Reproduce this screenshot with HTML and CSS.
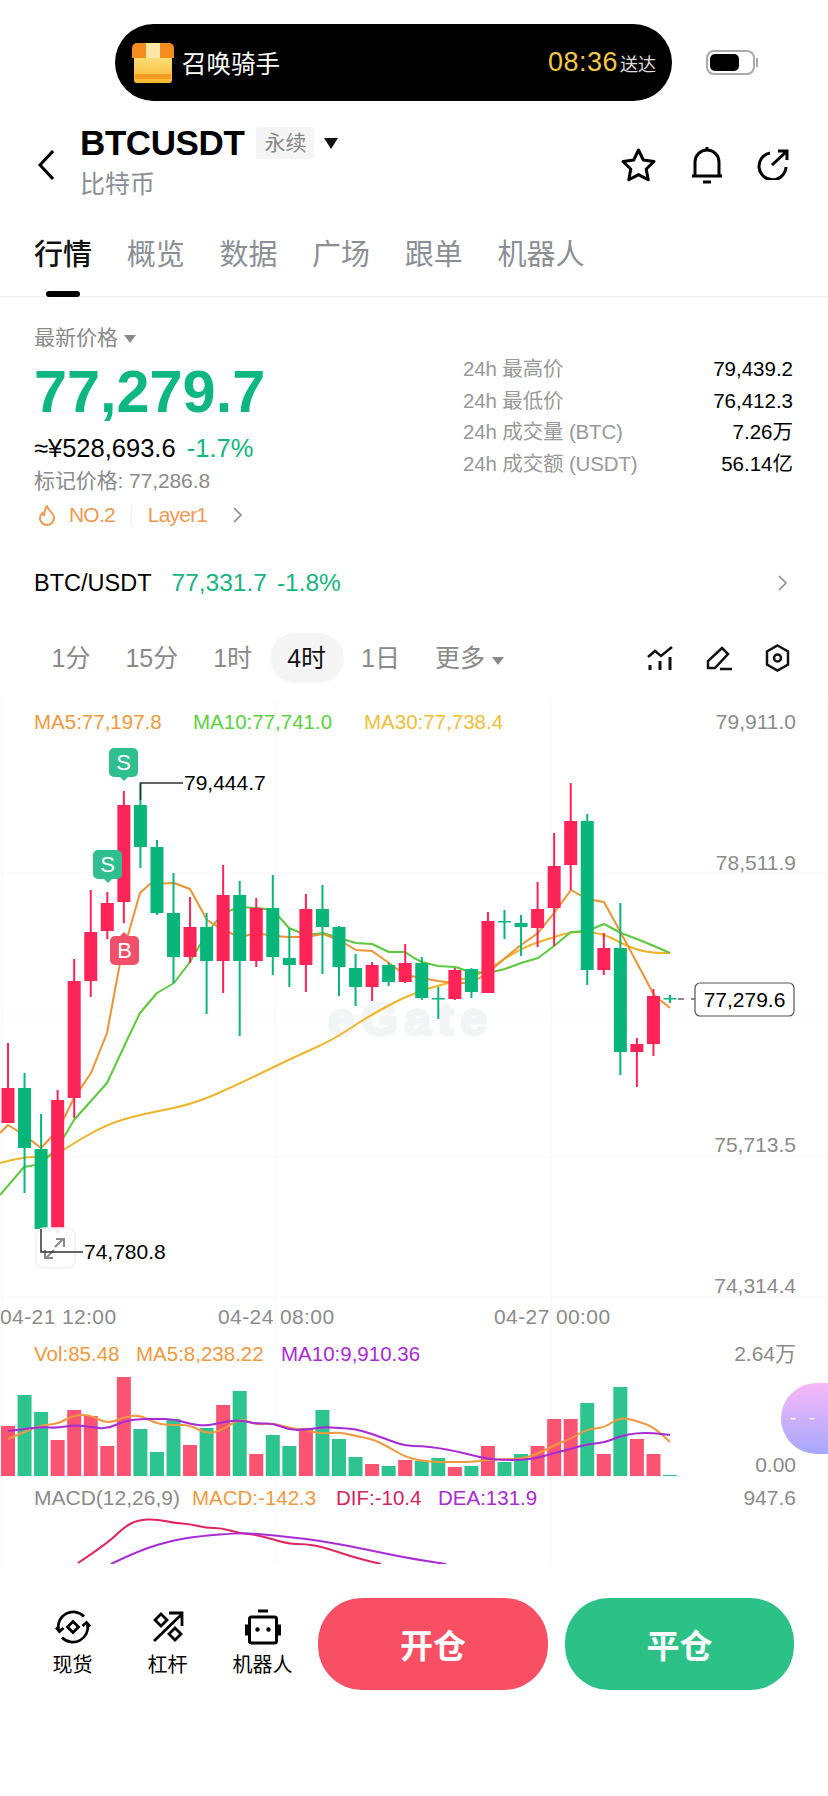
FILE: index.html
```html
<!DOCTYPE html>
<html lang="zh-CN">
<head>
  <meta charset="UTF-8" />
  <meta name="viewport" content="width=device-width, initial-scale=1.0"/>
  <title>BTCUSDT 永续</title>
  <link rel="stylesheet" href="styles.css">
</head>
<body>
  <!-- Barra superior con la isla de pedido -->
  <div class="status">
    <div class="island">
      <svg class="box-icon" width="42" height="40" viewBox="0 0 42 40">
        <defs>
          <linearGradient id="boxFill" x1="0" y1="0" x2="0" y2="1">
            <stop offset="0" stop-color="#ffe58a"/>
            <stop offset="1" stop-color="#f8b82e"/>
          </linearGradient>
        </defs>
        <rect x="2" y="8" width="38" height="32" rx="3" fill="url(#boxFill)"/>
        <path d="M5 0h32a5 5 0 0 1 5 5v10H0V5a5 5 0 0 1 5-5z" fill="#f58d1e"/>
        <rect x="14" y="0" width="14" height="15" fill="#ffe7a8"/>
        <rect x="3" y="31" width="36" height="5" fill="#f59a23"/>
      </svg>
      <span class="island-title">召唤骑手</span>
      <span class="island-time">08:36</span>
      <span class="island-note">送达</span>
    </div>
    <div class="battery"><span class="battery-level"></span></div>
  </div>

  <header class="header">
    <svg class="back" width="16" height="30" viewBox="0 0 16 30">
      <path d="M15 1L2 15l13 14" fill="none" stroke="#000" stroke-width="3"/>
    </svg>
    <div class="title-block">
      <div class="title-row">
        <h1 class="symbol">BTCUSDT</h1>
        <span class="tag">永续</span>
        <span class="tri tri-black"></span>
      </div>
      <div class="coin-name">比特币</div>
    </div>
    <div class="header-icons">
      <svg width="37" height="36" viewBox="0 0 37 36">
        <path d="M18.500 3l4.800 10 10.700 1.500-7.800 7.500 2 10.800-9.700-5.200-9.700 5.200 2-10.800L3 14.500 13.700 13z" fill="none" stroke="#000" stroke-width="3" stroke-linejoin="round"/>
      </svg>
      <svg width="32" height="37" viewBox="0 0 32 37">
        <path d="M4 28V15a12 12 0 0 1 24 0v13M1 29h30M16 0v4M12 35h8" fill="none" stroke="#000" stroke-width="3"/>
      </svg>
      <svg width="32" height="33" viewBox="0 0 32 33">
        <path d="M13 6A13.500 13.500 0 1 0 29 20M15 18L29 5M21 4h9v9" fill="none" stroke="#000" stroke-width="3"/>
      </svg>
    </div>
  </header>

  <nav class="tabs">
    <a class="tab active">行情</a>
    <a class="tab">概览</a>
    <a class="tab">数据</a>
    <a class="tab">广场</a>
    <a class="tab">跟单</a>
    <a class="tab">机器人</a>
  </nav>

  <section class="summary">
    <div class="price-col">
      <div class="price-label">最新价格 <span class="tri tri-gray"></span></div>
      <div class="price">77,279.7</div>
      <div class="price-sub">≈¥528,693.6 <span class="up">-1.7%</span></div>
      <div class="mark">标记价格: 77,286.8</div>
      <div class="rank">
        <svg width="18" height="21" viewBox="0 0 18 21">
          <path d="M9 1c.5 4 7 6.500 7 12a7 7 0 0 1-14 0c0-2.500 1.200-3.800 2.500-5 .3 1.300.8 2 1.500 2.300C6.200 7 7 4 9 1z" fill="none" stroke="#f2984f" stroke-width="2" stroke-linejoin="round"/>
        </svg>
        <span class="rank-no">NO.2</span>
        <span class="rank-line"></span>
        <span>Layer1</span>
        <svg class="rank-arrow" width="10" height="16" viewBox="0 0 10 16">
          <path d="M1 1l7 7-7 7" fill="none" stroke="#888" stroke-width="1.500"/>
        </svg>
      </div>
    </div>
    <div class="stats">
      <div class="stat"><span>24h 最高价</span><b>79,439.2</b></div>
      <div class="stat"><span>24h 最低价</span><b>76,412.3</b></div>
      <div class="stat"><span>24h 成交量 (BTC)</span><b>7.26万</b></div>
      <div class="stat"><span>24h 成交额 (USDT)</span><b>56.14亿</b></div>
    </div>
  </section>

  <div class="pair">
    <span class="pair-name">BTC/USDT</span>
    <span class="pair-price">77,331.7</span>
    <span class="pair-price">-1.8%</span>
    <svg class="pair-arrow" width="10" height="16" viewBox="0 0 10 16">
      <path d="M1 1l7 7-7 7" fill="none" stroke="#888" stroke-width="1.500"/>
    </svg>
  </div>

  <div class="periods">
    <span class="period">1分</span>
    <span class="period">15分</span>
    <span class="period">1时</span>
    <span class="period active">4时</span>
    <span class="period">1日</span>
    <span class="period">更多 <span class="tri tri-gray"></span></span>
    <div class="tools">
      <svg width="26" height="24" viewBox="0 0 26 24">
        <path d="M1 11l7-6 6 5L25 1" fill="none" stroke="#111" stroke-width="2.500"/>
        <path d="M3 19v5M13 15v9M23 11v13" fill="none" stroke="#111" stroke-width="3"/>
      </svg>
      <svg width="26" height="25" viewBox="0 0 26 25">
        <path d="M16 2l6 6L9 22H2v-7zM14 23h12" fill="none" stroke="#111" stroke-width="2.500"/>
      </svg>
      <svg width="25" height="28" viewBox="0 0 25 28">
        <path d="M12.500 1.500l10.500 6v13l-10.500 6-10.500-6v-13z" fill="none" stroke="#111" stroke-width="2.500"/>
        <circle cx="12.500" cy="14" r="3.500" fill="none" stroke="#111" stroke-width="2.500"/>
      </svg>
    </div>
  </div>

  <div class="chart">
    <!-- viewBox en coordenadas de pagina: 683 es donde empieza el grafico -->
    <svg id="kline" width="828" height="881" viewBox="0 683 828 881">
      <g id="grid"></g>
      <text class="wm" x="328" y="1035">eGate</text>
      <g id="lines"></g>
      <g id="candles"></g>

      <text class="t ma5" x="34" y="729">MA5:77,197.8</text>
      <text class="t ma10" x="193" y="729">MA10:77,741.0</text>
      <text class="t ma30" x="364" y="729">MA30:77,738.4</text>
      <text class="t axis end" x="796" y="729">79,911.0</text>
      <text class="t axis end" x="796" y="870">78,511.9</text>
      <text class="t axis end" x="796" y="1152">75,713.5</text>
      <text class="t axis end" x="796" y="1293">74,314.4</text>
      <text class="t axis date" x="0" y="1324">04-21 12:00</text>
      <text class="t axis date" x="218" y="1324">04-24 08:00</text>
      <text class="t axis date" x="494" y="1324">04-27 00:00</text>

      <path class="sig-s" d="M114 748h19a5 5 0 0 1 5 5v19a5 5 0 0 1-5 5h-5l-4 4-4-4h-6a5 5 0 0 1-5-5v-19a5 5 0 0 1 5-5z"/>
      <text class="sig-t" x="123.500" y="770">S</text>
      <path class="sig-s" d="M98 850h19a5 5 0 0 1 5 5v19a5 5 0 0 1-5 5h-5l-4 4-4-4h-6a5 5 0 0 1-5-5v-19a5 5 0 0 1 5-5z"/>
      <text class="sig-t" x="107.500" y="872">S</text>
      <path class="sig-b" d="M115 936h5l4-4 4 4h6a5 5 0 0 1 5 5v19a5 5 0 0 1-5 5h-19a5 5 0 0 1-5-5v-19a5 5 0 0 1 5-5z"/>
      <text class="sig-t" x="124.500" y="958">B</text>

      <path class="lead" d="M140.500 800V783H183"/>
      <text class="t high" x="184" y="790">79,444.7</text>

      <rect class="expand" x="36" y="1228" width="39" height="40" rx="8"/>
      <path class="expand-arrow" d="M55 1247l8-8M56 1239h8v8M54 1250l-8 8M45 1250v8h8"/>
      <path class="lead" d="M41 1229V1252H83"/>
      <text class="t high" x="84" y="1259">74,780.8</text>

      <path class="price-dash" d="M678 999H695"/>
      <rect class="price-box" x="695" y="983" width="99" height="33" rx="5"/>
      <text class="t high mid" x="744.500" y="1007">77,279.6</text>

      <text class="t vol-c" x="34" y="1361">Vol:85.48</text>
      <text class="t vol-c" x="136" y="1361">MA5:8,238.22</text>
      <text class="t purple" x="281" y="1361">MA10:9,910.36</text>
      <text class="t axis end" x="796" y="1361">2.64万</text>
      <text class="t axis end" x="796" y="1472">0.00</text>

      <text class="t axis" x="34" y="1505">MACD(12,26,9)</text>
      <text class="t vol-c" x="192" y="1505">MACD:-142.3</text>
      <text class="t pink" x="336" y="1505">DIF:-10.4</text>
      <text class="t purple" x="438" y="1505">DEA:131.9</text>
      <text class="t axis end" x="796" y="1505">947.6</text>
    </svg>
    <div class="float-btn">- -</div>
  </div>

  <footer class="actions">
    <a class="action">
      <svg width="36" height="36" viewBox="0 0 36 36">
        <path d="M3.500 21A15 15 0 0 1 29 7.500M32.500 15A15 15 0 0 1 7 28.500" fill="none" stroke="#000" stroke-width="2.800"/>
        <path d="M1 18.500l3.500 4 4-3.500M35 17.500l-3.500-4-4 3.500" fill="none" stroke="#000" stroke-width="2.800"/>
        <path d="M18 12.500l5.500 5.500-5.500 5.500-5.500-5.500z" fill="none" stroke="#000" stroke-width="2.800"/>
      </svg>
      <span>现货</span>
    </a>
    <a class="action">
      <svg width="32" height="32" viewBox="0 0 32 32">
        <path d="M2 30L30 3M17 2h13v13" fill="none" stroke="#000" stroke-width="2.800"/>
        <path d="M9 3l6 6-6 6-6-6zM23 17l6 6-6 6-6-6z" fill="none" stroke="#000" stroke-width="2.800"/>
      </svg>
      <span>杠杆</span>
    </a>
    <a class="action">
      <svg width="36" height="35" viewBox="0 0 36 35">
        <path d="M13 1.500h10" stroke="#000" stroke-width="3"/>
        <rect x="4.500" y="7.500" width="27" height="26" rx="2" fill="none" stroke="#000" stroke-width="3"/>
        <path d="M1.500 15v11M34.500 15v11" stroke="#000" stroke-width="3"/>
        <circle cx="12.500" cy="20" r="2.200"/>
        <circle cx="23.500" cy="20" r="2.200"/>
      </svg>
      <span>机器人</span>
    </a>
    <button class="trade open">开仓</button>
    <button class="trade close">平仓</button>
  </footer>

  <script src="chart.js"></script>
</body>
</html>
```

FILE: styles.css
```css
* {
  box-sizing: border-box;
}

body {
  margin: 0;
  width: 828px;
  height: 1796px;
  overflow: hidden;
  background: white;
  color: #000;
  font-family: 'Liberation Sans', 'Noto Sans CJK SC', sans-serif;
}

/* Triangulos de los desplegables */
.tri {
  display: inline-block;
  width: 0;
  height: 0;
  border-left: 6px solid transparent;
  border-right: 6px solid transparent;
  border-top: 9px solid #888;
}

.tri-black {
  border-left-width: 7px;
  border-right-width: 7px;
  border-top: 11px solid #111;
}

.tri-gray {
  vertical-align: 2px;
  border-left-width: 6px;
  border-right-width: 6px;
  border-top: 8px solid #8a8a8a;
}

/* Barra superior */
.status {
  display: flex;
  align-items: center;
  gap: 34px;
  padding: 24px 0 0 115px;
}

.island {
  display: flex;
  align-items: center;
  width: 557px;
  height: 77px;
  padding: 0 16px 0 17px;
  border-radius: 39px;
  background: #000;
  color: white;
}

.box-icon {
  margin-right: 8px;
}

.island-title {
  font-size: 24.5px;
}

.island-time {
  margin-left: auto;
  margin-right: 2px;
  color: #f5c842;
  font-size: 27px;
  letter-spacing: 0.5px;
}

.island-note {
  color: #ddd;
  font-size: 18px;
}

.battery {
  position: relative;
  width: 49px;
  height: 25px;
  padding: 2px;
  border: 2px solid #aaa;
  border-radius: 8px;
}

.battery::after {
  content: "";
  position: absolute;
  top: 6px;
  right: -5px;
  width: 2px;
  height: 9px;
  background: #aaa;
}

.battery-level {
  display: block;
  width: 29px;
  height: 17px;
  border-radius: 5px;
  background: #000;
}

/* Cabecera */
.header {
  display: flex;
  align-items: flex-start;
  height: 73px;
  margin-top: 26px;
  padding-left: 38px;
}

.back {
  margin-top: 23px;
  margin-right: 26px;
}

.title-row {
  display: flex;
  align-items: center;
  height: 32px;
}

.symbol {
  margin: 0 12px 0 0;
  font-size: 35px;
  line-height: 32px;
  letter-spacing: -0.4px;
}

.tag {
  width: 58px;
  height: 32px;
  margin-right: 10px;
  border-radius: 3px;
  background: #f5f5f5;
  color: #888;
  font-size: 21px;
  line-height: 32px;
  text-align: center;
}

.coin-name {
  margin-top: 12px;
  color: #8a8f96;
  font-size: 25px;
  line-height: 26px;
}

.header-icons {
  display: flex;
  align-items: flex-start;
  gap: 34px;
  margin-left: auto;
  margin-right: 39px;
  margin-top: 20px;
}

/* Pestanas */
.tabs {
  display: flex;
  gap: 34.7px;
  height: 57px;
  margin-top: 40px;
  padding-left: 34px;
  border-bottom: 1px solid #eee;
}

.tab {
  position: relative;
  color: #8a8f96;
  font-size: 29px;
  line-height: 30px;
}

.tab.active {
  color: #111;
  font-weight: 500;
}

.tab.active::after {
  content: "";
  position: absolute;
  left: 12px;
  bottom: -1px;
  width: 34px;
  height: 6px;
  border-radius: 3px;
  background: #000;
}

/* Precio y estadisticas */
.summary {
  display: flex;
  justify-content: space-between;
  padding: 0 35px 0 34px;
}

.price-col {
  padding-top: 28px;
}

.price-label {
  color: #8a8a8a;
  font-size: 21px;
  line-height: 26px;
}

.price {
  margin-top: 11px;
  color: #0db77f;
  font-size: 59.4px;
  font-weight: bold;
  line-height: 60px;
}

.price-sub {
  margin-top: 12px;
  font-size: 25.5px;
  line-height: 28px;
}

.up {
  margin-left: 4px;
  color: #0db77f;
}

.mark {
  margin-top: 6px;
  color: #8a8a8a;
  font-size: 21px;
  letter-spacing: -0.1px;
  line-height: 26px;
}

.rank {
  display: flex;
  align-items: center;
  height: 26px;
  margin-top: 8px;
  margin-left: 4px;
  color: #f2984f;
  font-size: 21px;
  letter-spacing: -0.8px;
}

.rank-no {
  margin-left: 13px;
}

.rank-line {
  width: 1px;
  height: 20px;
  margin: 0 16px;
  background: #f0ece8;
}

.rank-arrow {
  margin-left: 26px;
}

.stats {
  width: 330px;
  padding-top: 56px;
}

.stat {
  display: flex;
  justify-content: space-between;
  height: 31.6px;
  color: #999;
  font-size: 20.5px;
  letter-spacing: -0.15px;
  line-height: 31.6px;
}

.stat b {
  color: #000;
  font-size: 20.5px;
  font-weight: normal;
  letter-spacing: 0;
}

/* Par spot */
.pair {
  display: flex;
  align-items: center;
  height: 30px;
  margin-top: 40px;
  padding: 0 40px 0 34px;
  font-size: 24.5px;
}

.pair-name {
  margin-right: 20px;
  font-size: 23.5px;
}

.pair-price {
  margin-right: 10px;
  color: #16b57f;
}

.pair-arrow {
  margin-left: auto;
}

/* Temporalidades */
.periods {
  display: flex;
  align-items: center;
  height: 50px;
  margin-top: 35px;
  padding: 0 38px 0 34px;
}

.period {
  height: 50px;
  padding: 0 17.5px;
  border-radius: 25px;
  color: #8a8a8a;
  font-size: 25px;
  line-height: 51px;
}

.period.active {
  background: #f5f5f5;
  color: #111;
}

.tools {
  display: flex;
  align-items: center;
  gap: 33px;
  margin-left: auto;
}

/* Grafico */
.chart {
  position: relative;
  height: 881px;
}

#kline {
  display: block;
}

.grid-line {
  stroke: #f6f6f7;
  stroke-width: 1;
}

.wm {
  fill: #f3f4f6;
  stroke: #f3f4f6;
  stroke-width: 3;
  font-size: 47px;
  font-weight: bold;
  letter-spacing: 7px;
}

.ma-line {
  fill: none;
  stroke-width: 2;
  stroke-linejoin: round;
}

.c-up {
  fill: #ff2457;
}

.c-down {
  fill: #08b67a;
}

.v-up {
  fill: #fb5372;
}

.v-down {
  fill: #2ec48f;
}

.t {
  font-size: 20.5px;
}

.end {
  text-anchor: end;
}

.mid {
  text-anchor: middle;
}

.axis {
  fill: #8b8b8b;
  font-size: 21px;
}

.date {
  letter-spacing: 0.4px;
}

.ma5 {
  fill: #f0993f;
}

.ma10 {
  fill: #5bd13f;
}

.ma30 {
  fill: #f0be3a;
}

.vol-c {
  fill: #f0993f;
}

.purple {
  fill: #a92bd6;
}

.pink {
  fill: #d6225f;
}

.high {
  fill: #000;
  font-size: 21px;
}

.lead {
  fill: none;
  stroke: #333;
  stroke-width: 1.5;
}

.sig-s {
  fill: #2fbf8f;
}

.sig-b {
  fill: #f0506a;
}

.sig-t {
  fill: white;
  font-size: 22px;
  text-anchor: middle;
}

.expand {
  fill: rgba(255, 255, 255, 0.85);
  stroke: #f0f0f0;
  stroke-width: 1.5;
}

.expand-arrow {
  fill: none;
  stroke: #888;
  stroke-width: 2;
}

.price-dash {
  stroke: #666;
  stroke-width: 1.5;
  stroke-dasharray: 6 7;
}

.price-box {
  fill: white;
  stroke: #555;
  stroke-width: 1.2;
}

.float-btn {
  position: absolute;
  top: 700px;
  right: 0;
  width: 47px;
  height: 71px;
  border-radius: 36px 0 0 36px;
  background: linear-gradient(to bottom, #f8b8f8, #a5a8fb);
  color: white;
  font-size: 18px;
  letter-spacing: 4px;
  line-height: 71px;
  text-align: center;
}

/* Barra inferior */
.actions {
  display: flex;
  margin-top: 34px;
  padding-left: 25px;
}

.action {
  display: flex;
  flex-direction: column;
  align-items: center;
  width: 95px;
  height: 92px;
  padding-top: 11px;
  font-size: 20px;
  line-height: 22px;
}

.action svg {
  height: 36px;
  margin-bottom: 9px;
}

.trade {
  width: 229px;
  height: 92px;
  margin-left: 17px;
  border: none;
  border-radius: 44px;
  color: white;
  font-family: inherit;
  font-size: 33px;
  font-weight: 700;
}

.trade.open {
  width: 230px;
  margin-left: 8px;
  background: #f94f64;
}

.trade.close {
  background: #2cc287;
}
```

FILE: chart.js
```js
const NS = "http://www.w3.org/2000/svg";

// color (r/g), mecha arriba, cuerpo arriba, cuerpo abajo, mecha abajo, volumen
const velas = [
  ["r", 1043, 1088, 1123, 1123, 50], ["g", 1073, 1088, 1148, 1193, 81],
  ["g", 1114, 1149, 1229, 1229, 64], ["r", 1090, 1100, 1228, 1233, 36],
  ["r", 959, 981, 1098, 1118, 66], ["r", 890, 932, 981, 997, 60],
  ["r", 892, 903, 931, 939, 30], ["r", 791, 805, 902, 923, 99],
  ["g", 783, 805, 847, 868, 47], ["g", 840, 847, 913, 915, 24],
  ["g", 873, 913, 957, 983, 57], ["r", 897, 927, 957, 963, 31],
  ["g", 913, 927, 961, 1014, 48], ["r", 865, 895, 961, 993, 71],
  ["g", 881, 895, 961, 1036, 85], ["r", 898, 908, 961, 967, 22],
  ["g", 875, 908, 957, 975, 41], ["g", 928, 958, 965, 987, 30],
  ["r", 894, 909, 965, 992, 48], ["g", 885, 909, 927, 974, 66],
  ["g", 926, 927, 967, 996, 37], ["g", 954, 968, 987, 1006, 19],
  ["r", 962, 965, 987, 1001, 12], ["g", 963, 965, 982, 986, 10],
  ["r", 944, 963, 982, 983, 16], ["g", 957, 963, 998, 1000, 15],
  ["g", 987, 998, 999.5, 1019, 18], ["r", 968, 970, 999, 1000, 9],
  ["g", 968, 969, 992, 998, 10], ["r", 912, 921, 993, 993, 30],
  ["g", 910, 921, 922.5, 939, 14], ["g", 915, 923, 927, 956, 22],
  ["r", 882, 909, 928, 947, 30], ["r", 833, 866, 908, 946, 57],
  ["r", 783, 821, 865, 890, 57], ["g", 814, 821, 970, 985, 73],
  ["r", 933, 948, 970, 975, 22], ["g", 903, 948, 1052, 1075, 89],
  ["r", 1038, 1044, 1052, 1087, 37], ["r", 989, 996, 1044, 1056, 22],
  ["g", 995, 998, 999.5, 1003, 1]
];

const ma5 = [[0,1133],[8,1125],[24,1135],[41,1148],[58,1130],[74,1098],[91,1073],[107,1033],[120,963],[140,893],[150,884],[174,883],[190,889],[207,920],[223,930],[240,937],[257,933],[273,936],[289,937],[306,937],[323,934],[339,940],[356,950],[372,951],[389,963],[405,975],[422,978],[438,981],[455,983],[471,983],[488,973],[505,958],[521,945],[538,933],[554,913],[571,890],[587,899],[604,902],[621,933],[637,963],[654,995],[670,1008]];
const ma10 = [[0,1195],[24,1167],[41,1164],[58,1147],[74,1120],[107,1083],[128,1038],[140,1013],[157,993],[174,983],[190,962],[207,933],[223,913],[240,907],[257,908],[273,910],[289,928],[306,935],[323,933],[339,938],[356,943],[372,944],[389,952],[405,952],[414,958],[422,962],[438,966],[455,967],[471,972],[488,973],[505,969],[521,963],[538,958],[554,946],[571,932],[587,931],[604,924],[621,933],[637,939],[654,946],[670,953]];
const ma30 = [[0,1163],[24,1157],[41,1157],[58,1155],[64,1149],[107,1124],[143,1114],[190,1105],[233,1087],[290,1059],[333,1040],[367,1017],[414,992],[471,977],[488,970],[521,948],[554,937],[571,932],[587,932],[604,934],[621,943],[637,950],[654,953],[670,953]];

const volMa5 = [1439,1432,1425,1424,1415,1415,1424,1417,1415,1424,1425,1425,1434,1430,1418,1425,1423,1428,1430,1434,1432,1436,1439,1447,1457,1461,1462,1462,1462,1460,1459,1459,1454,1445,1439,1429,1428,1417,1421,1427,1442];
const volMa10 = [1431,1429,1427,1428,1425,1427,1429,1421,1419,1419,1419,1424,1426,1422,1420,1424,1423,1430,1430,1427,1428,1429,1434,1440,1446,1446,1448,1451,1455,1459,1460,1460,1458,1453,1449,1444,1443,1436,1433,1433,1435];

const dif = [[78,1563],[108,1543],[124,1527],[138,1520],[156,1519],[174,1523],[190,1524],[206,1528],[222,1528],[238,1533],[259,1535],[288,1544],[306,1544],[323,1547],[356,1558],[381,1564]];
const dea = [[111,1564],[140,1550],[174,1540],[201,1536],[238,1533],[259,1534],[290,1537],[322,1541],[359,1548],[407,1558],[446,1564]];

const BASE_VOL = 1476;
const centro = i => 8 + i * 16.55;

function nodo(tag, attrs, padre) {
  const el = document.createElementNS(NS, tag);
  for (const k in attrs) el.setAttribute(k, attrs[k]);
  padre.appendChild(el);
  return el;
}

function linea(puntos, color) {
  nodo("polyline", {
    class: "ma-line",
    points: puntos.map(p => p.join(",")).join(" "),
    stroke: color
  }, document.getElementById("lines"));
}

// Igual que linea() pero redondea las esquinas pasando por los puntos medios
function curva(puntos, color) {
  let d = "M" + puntos[0].join(" ");
  for (let i = 1; i < puntos.length - 1; i++) {
    const mx = (puntos[i][0] + puntos[i + 1][0]) / 2;
    const my = (puntos[i][1] + puntos[i + 1][1]) / 2;
    d += ` Q${puntos[i][0]} ${puntos[i][1]} ${mx} ${my}`;
  }
  d += " L" + puntos[puntos.length - 1].join(" ");
  nodo("path", { class: "ma-line", d: d, stroke: color }, document.getElementById("lines"));
}

function dibujarGrid() {
  const grid = document.getElementById("grid");
  [873, 1016, 1157, 1297].forEach(y => {
    nodo("line", { class: "grid-line", x1: 0, x2: 828, y1: y, y2: y }, grid);
  });
  [2, 275, 551, 827].forEach(x => {
    nodo("line", { class: "grid-line", x1: x, x2: x, y1: 700, y2: 1564 }, grid);
  });
}

function dibujarVelas() {
  const g = document.getElementById("candles");
  velas.forEach((v, i) => {
    const x = centro(i);
    const clase = v[0] === "r" ? "c-up" : "c-down";
    nodo("rect", { class: clase, x: x - 1, y: v[1], width: 2, height: v[4] - v[1] }, g);
    nodo("rect", { class: clase, x: x - 6.5, y: v[2], width: 13, height: v[3] - v[2] }, g);
  });
}

function dibujarVolumen() {
  const g = document.getElementById("lines");
  velas.forEach((v, i) => {
    nodo("rect", {
      class: v[0] === "r" ? "v-up" : "v-down",
      x: centro(i) - 7,
      y: BASE_VOL - v[5],
      width: 14,
      height: v[5]
    }, g);
  });
}

dibujarGrid();
dibujarVolumen();
curva(ma30, "#f0b429");
linea(ma10, "#5cc93c");
linea(ma5, "#ee9236");
curva(volMa5.map((y, i) => [centro(i), y]), "#f0993f");
curva(volMa10.map((y, i) => [centro(i), y]), "#a92bd6");
curva(dif, "#e0245e");
curva(dea, "#a92bd6");
dibujarVelas();
```
